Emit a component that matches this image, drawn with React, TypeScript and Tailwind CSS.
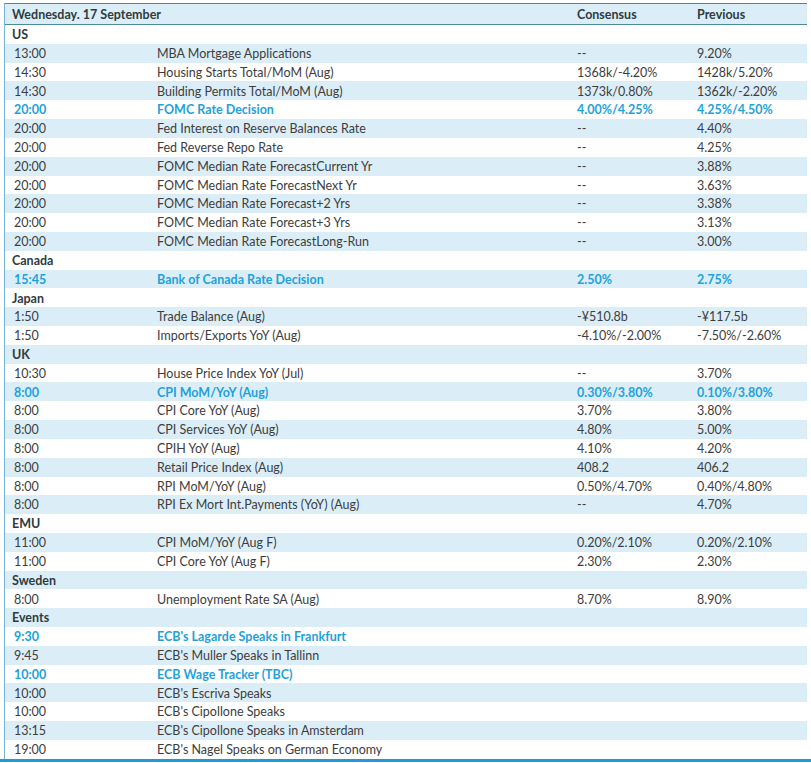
type Row =
  | { kind: "section"; label: string }
  | {
      kind: "item";
      time: string;
      name: string;
      consensus?: string;
      previous?: string;
      hot?: boolean;
    };

const rows: Row[] = [
  { kind: "section", label: "US" },
  { kind: "item", time: "13:00", name: "MBA Mortgage Applications", consensus: "--", previous: "9.20%" },
  { kind: "item", time: "14:30", name: "Housing Starts Total/MoM (Aug)", consensus: "1368k/-4.20%", previous: "1428k/5.20%" },
  { kind: "item", time: "14:30", name: "Building Permits Total/MoM (Aug)", consensus: "1373k/0.80%", previous: "1362k/-2.20%" },
  { kind: "item", time: "20:00", name: "FOMC Rate Decision", consensus: "4.00%/4.25%", previous: "4.25%/4.50%", hot: true },
  { kind: "item", time: "20:00", name: "Fed Interest on Reserve Balances Rate", consensus: "--", previous: "4.40%" },
  { kind: "item", time: "20:00", name: "Fed Reverse Repo Rate", consensus: "--", previous: "4.25%" },
  { kind: "item", time: "20:00", name: "FOMC Median Rate ForecastCurrent Yr", consensus: "--", previous: "3.88%" },
  { kind: "item", time: "20:00", name: "FOMC Median Rate ForecastNext Yr", consensus: "--", previous: "3.63%" },
  { kind: "item", time: "20:00", name: "FOMC Median Rate Forecast+2 Yrs", consensus: "--", previous: "3.38%" },
  { kind: "item", time: "20:00", name: "FOMC Median Rate Forecast+3 Yrs", consensus: "--", previous: "3.13%" },
  { kind: "item", time: "20:00", name: "FOMC Median Rate ForecastLong-Run", consensus: "--", previous: "3.00%" },
  { kind: "section", label: "Canada" },
  { kind: "item", time: "15:45", name: "Bank of Canada Rate Decision", consensus: "2.50%", previous: "2.75%", hot: true },
  { kind: "section", label: "Japan" },
  { kind: "item", time: "1:50", name: "Trade Balance (Aug)", consensus: "-¥510.8b", previous: "-¥117.5b" },
  { kind: "item", time: "1:50", name: "Imports/Exports YoY (Aug)", consensus: "-4.10%/-2.00%", previous: "-7.50%/-2.60%" },
  { kind: "section", label: "UK" },
  { kind: "item", time: "10:30", name: "House Price Index YoY (Jul)", consensus: "--", previous: "3.70%" },
  { kind: "item", time: "8:00", name: "CPI MoM/YoY (Aug)", consensus: "0.30%/3.80%", previous: "0.10%/3.80%", hot: true },
  { kind: "item", time: "8:00", name: "CPI Core YoY (Aug)", consensus: "3.70%", previous: "3.80%" },
  { kind: "item", time: "8:00", name: "CPI Services YoY (Aug)", consensus: "4.80%", previous: "5.00%" },
  { kind: "item", time: "8:00", name: "CPIH YoY (Aug)", consensus: "4.10%", previous: "4.20%" },
  { kind: "item", time: "8:00", name: "Retail Price Index (Aug)", consensus: "408.2", previous: "406.2" },
  { kind: "item", time: "8:00", name: "RPI MoM/YoY (Aug)", consensus: "0.50%/4.70%", previous: "0.40%/4.80%" },
  { kind: "item", time: "8:00", name: "RPI Ex Mort Int.Payments (YoY) (Aug)", consensus: "--", previous: "4.70%" },
  { kind: "section", label: "EMU" },
  { kind: "item", time: "11:00", name: "CPI MoM/YoY (Aug F)", consensus: "0.20%/2.10%", previous: "0.20%/2.10%" },
  { kind: "item", time: "11:00", name: "CPI Core YoY (Aug F)", consensus: "2.30%", previous: "2.30%" },
  { kind: "section", label: "Sweden" },
  { kind: "item", time: "8:00", name: "Unemployment Rate SA (Aug)", consensus: "8.70%", previous: "8.90%" },
  { kind: "section", label: "Events" },
  { kind: "item", time: "9:30", name: "ECB's Lagarde Speaks in Frankfurt", hot: true },
  { kind: "item", time: "9:45", name: "ECB's Muller Speaks in Tallinn" },
  { kind: "item", time: "10:00", name: "ECB Wage Tracker (TBC)", hot: true },
  { kind: "item", time: "10:00", name: "ECB's Escriva Speaks" },
  { kind: "item", time: "10:00", name: "ECB's Cipollone Speaks" },
  { kind: "item", time: "13:15", name: "ECB's Cipollone Speaks in Amsterdam" },
  { kind: "item", time: "19:00", name: "ECB's Nagel Speaks on German Economy" },
];

export default function App() {
  return (
    <div
      className="w-[811px] h-[763px] bg-white pt-[3px] text-[12.5px] leading-none text-[#3d3d3d] overflow-hidden"
      style={{ fontFamily: "Lato, 'Open Sans', sans-serif" }}
    >
      <div className="ml-[4px] border-l border-[#74b4d6]">
        <div className="mr-[4px] flex h-[22px] items-center whitespace-nowrap border-y border-[#4d8a98] bg-[#dbeef8] pt-[3px] font-bold text-[#2f3b40]">
          <div className="w-[152px] pl-[7px]">Wednesday. 17 September</div>
          <div className="w-[420px]" />
          <div className="w-[120px]">Consensus</div>
          <div className="flex-1">Previous</div>
        </div>
        <div className="mr-[4px]">
          {rows.map((row, i) => {
            const bg = i % 2 === 1 ? "bg-[#dbeef8]" : "bg-white";
            if (row.kind === "section") {
              return (
                <div
                  key={i}
                  className={`flex h-[18.82px] items-center pt-[2px] pl-[7px] font-bold text-[#2f3b40] ${bg}`}
                >
                  {row.label}
                </div>
              );
            }
            return (
              <div
                key={i}
                className={`flex h-[18.82px] items-center whitespace-nowrap pt-[2px] ${bg} ${
                  row.hot ? "font-bold text-[#1ea2d8]" : ""
                }`}
              >
                <div className="w-[152px] pl-[9px]">{row.time}</div>
                <div className="w-[420px]">{row.name}</div>
                <div className="w-[120px]">{row.consensus}</div>
                <div className="flex-1">{row.previous}</div>
              </div>
            );
          })}
        </div>
      </div>
      <div className="h-[3px] bg-[#1f9ad6]" />
    </div>
  );
}
